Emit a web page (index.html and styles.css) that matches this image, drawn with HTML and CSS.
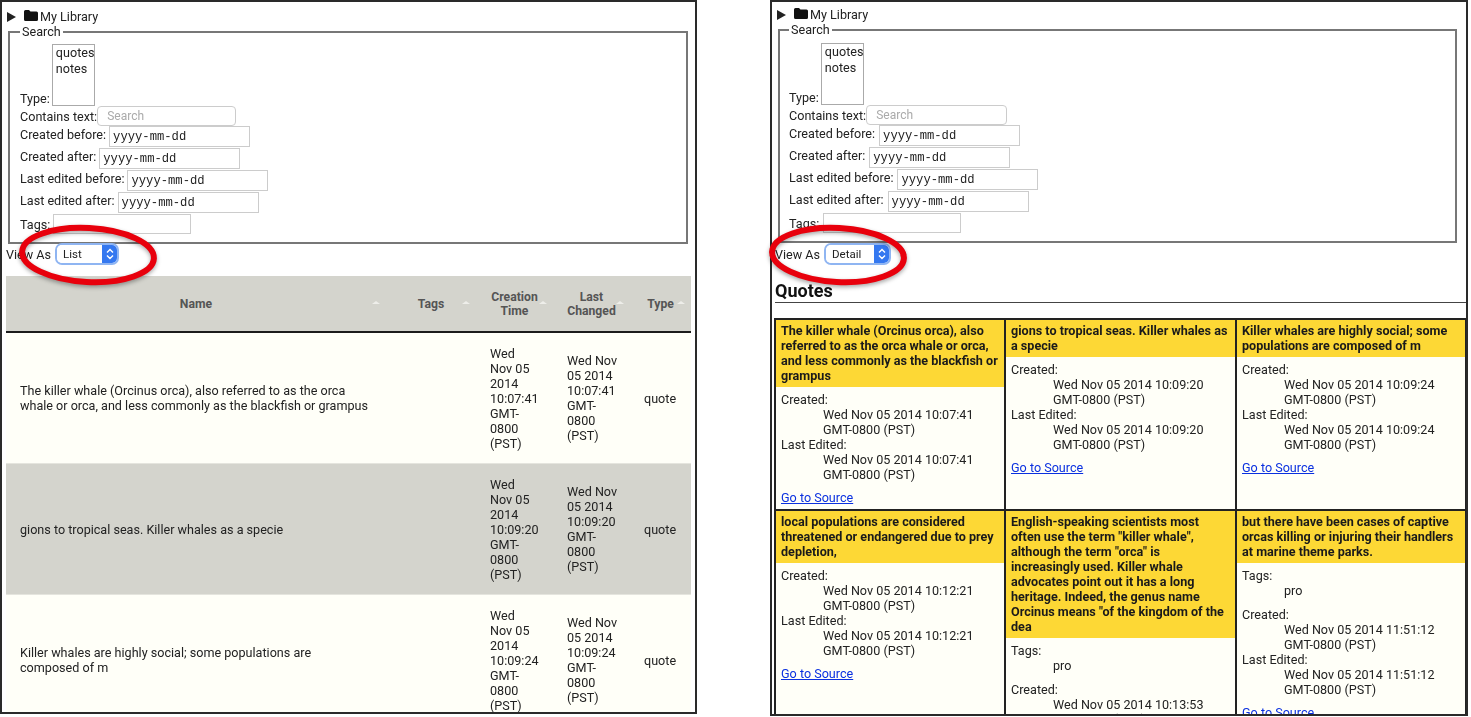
FILE: index.html
```html
<!DOCTYPE html>
<html lang="en">
<head>
<meta name="viewport" content="width=device-width, initial-scale=1">
<title>My Library</title>
<link rel="stylesheet" href="styles.css">
</head>
<body>

<div class="shots">

  <!-- list view -->
  <div class="shot shot-list">
    <div class="panel">
      <div class="tree">
        <span class="arrow"></span>
        <svg class="folder" width="14" height="11" viewBox="0 0 14 11"><path d="M0 1.5Q0 0 1.5 0H5L6.5 1.5H12.5Q14 1.5 14 3V9.5Q14 11 12.5 11H1.5Q0 11 0 9.5Z"/></svg>
        <span>My Library</span>
      </div>
      <fieldset class="search">
        <legend>Search</legend>
        <div class="row row-type"><label>Type:</label><div class="listbox"><div>quotes</div><div>notes</div></div></div>
        <div class="row row-plain"><label>Contains text:</label><input class="text-search" type="text" placeholder="Search"></div>
        <div class="row"><label>Created before:</label><input class="date" type="text" value="yyyy-mm-dd"></div>
        <div class="row"><label>Created after:</label><input class="date" type="text" value="yyyy-mm-dd"></div>
        <div class="row"><label>Last edited before:</label><input class="date" type="text" value="yyyy-mm-dd"></div>
        <div class="row"><label>Last edited after:</label><input class="date" type="text" value="yyyy-mm-dd"></div>
        <div class="row row-plain"><label>Tags:</label><input class="tags" type="text"></div>
      </fieldset>
      <div class="view-as">
        <span>View As</span>
        <div class="view-select">
          <select><option>List</option></select>
          <span class="chevrons"><svg width="8" height="12" viewBox="0 0 8 12"><path d="M1 4.5L4 1.5L7 4.5M1 7.5L4 10.5L7 7.5" fill="none" stroke="#fff" stroke-width="1.4"/></svg></span>
        </div>
      </div>
      <table class="items">
        <colgroup><col class="c-name"><col class="c-tags"><col class="c-date"><col class="c-date"><col class="c-type"></colgroup>
        <thead>
          <tr><th>Name</th><th>Tags</th><th>Creation Time</th><th>Last Changed</th><th>Type</th></tr>
        </thead>
        <tbody>
          <tr>
            <td>The killer whale (Orcinus orca), also referred to as the orca whale or orca, and less commonly as the blackfish or grampus</td>
            <td></td>
            <td>Wed Nov 05 2014 10:07:41 GMT-0800 (PST)</td>
            <td>Wed Nov 05 2014 10:07:41 GMT-0800 (PST)</td>
            <td>quote</td>
          </tr>
          <tr>
            <td>gions to tropical seas. Killer whales as a specie</td>
            <td></td>
            <td>Wed Nov 05 2014 10:09:20 GMT-0800 (PST)</td>
            <td>Wed Nov 05 2014 10:09:20 GMT-0800 (PST)</td>
            <td>quote</td>
          </tr>
          <tr>
            <td>Killer whales are highly social; some populations are composed of m</td>
            <td></td>
            <td>Wed Nov 05 2014 10:09:24 GMT-0800 (PST)</td>
            <td>Wed Nov 05 2014 10:09:24 GMT-0800 (PST)</td>
            <td>quote</td>
          </tr>
        </tbody>
      </table>
    </div>
    <svg class="circle" width="150" height="70" viewBox="0 0 150 70"><ellipse cx="75" cy="34" rx="66" ry="27" transform="rotate(3 75 34)"/></svg>
  </div>

  <!-- detail view -->
  <div class="shot shot-detail">
    <div class="panel">
      <div class="tree">
        <span class="arrow"></span>
        <svg class="folder" width="14" height="11" viewBox="0 0 14 11"><path d="M0 1.5Q0 0 1.5 0H5L6.5 1.5H12.5Q14 1.5 14 3V9.5Q14 11 12.5 11H1.5Q0 11 0 9.5Z"/></svg>
        <span>My Library</span>
      </div>
      <fieldset class="search">
        <legend>Search</legend>
        <div class="row row-type"><label>Type:</label><div class="listbox"><div>quotes</div><div>notes</div></div></div>
        <div class="row row-plain"><label>Contains text:</label><input class="text-search" type="text" placeholder="Search"></div>
        <div class="row"><label>Created before:</label><input class="date" type="text" value="yyyy-mm-dd"></div>
        <div class="row"><label>Created after:</label><input class="date" type="text" value="yyyy-mm-dd"></div>
        <div class="row"><label>Last edited before:</label><input class="date" type="text" value="yyyy-mm-dd"></div>
        <div class="row"><label>Last edited after:</label><input class="date" type="text" value="yyyy-mm-dd"></div>
        <div class="row row-plain"><label>Tags:</label><input class="tags" type="text"></div>
      </fieldset>
      <div class="view-as">
        <span>View As</span>
        <div class="view-select">
          <select><option>Detail</option></select>
          <span class="chevrons"><svg width="8" height="12" viewBox="0 0 8 12"><path d="M1 4.5L4 1.5L7 4.5M1 7.5L4 10.5L7 7.5" fill="none" stroke="#fff" stroke-width="1.4"/></svg></span>
        </div>
      </div>
      <h2 class="section">Quotes</h2>
      <div class="cards">
        <div class="card">
          <div class="card-title">The killer whale (Orcinus orca), also referred to as the orca whale or orca, and less commonly as the blackfish or grampus</div>
          <div class="card-body">
            <div>Created:</div>
            <div class="val">Wed Nov 05 2014 10:07:41 GMT-0800 (PST)</div>
            <div>Last Edited:</div>
            <div class="val">Wed Nov 05 2014 10:07:41 GMT-0800 (PST)</div>
            <a class="source" href="#">Go to Source</a>
          </div>
        </div>
        <div class="card">
          <div class="card-title">gions to tropical seas. Killer whales as a specie</div>
          <div class="card-body">
            <div>Created:</div>
            <div class="val">Wed Nov 05 2014 10:09:20 GMT-0800 (PST)</div>
            <div>Last Edited:</div>
            <div class="val">Wed Nov 05 2014 10:09:20 GMT-0800 (PST)</div>
            <a class="source" href="#">Go to Source</a>
          </div>
        </div>
        <div class="card">
          <div class="card-title">Killer whales are highly social; some populations are composed of m</div>
          <div class="card-body">
            <div>Created:</div>
            <div class="val">Wed Nov 05 2014 10:09:24 GMT-0800 (PST)</div>
            <div>Last Edited:</div>
            <div class="val">Wed Nov 05 2014 10:09:24 GMT-0800 (PST)</div>
            <a class="source" href="#">Go to Source</a>
          </div>
        </div>
        <div class="card">
          <div class="card-title">local populations are considered threatened or endangered due to prey depletion,</div>
          <div class="card-body">
            <div>Created:</div>
            <div class="val">Wed Nov 05 2014 10:12:21 GMT-0800 (PST)</div>
            <div>Last Edited:</div>
            <div class="val">Wed Nov 05 2014 10:12:21 GMT-0800 (PST)</div>
            <a class="source" href="#">Go to Source</a>
          </div>
        </div>
        <div class="card">
          <div class="card-title">English-speaking scientists most often use the term "killer whale", although the term "orca" is increasingly used. Killer whale advocates point out it has a long heritage. Indeed, the genus name Orcinus means "of the kingdom of the dea</div>
          <div class="card-body">
            <div>Tags:</div>
            <div class="val val-tag">pro</div>
            <div>Created:</div>
            <div class="val">Wed Nov 05 2014 10:13:53 GMT-0800 (PST)</div>
          </div>
        </div>
        <div class="card">
          <div class="card-title">but there have been cases of captive orcas killing or injuring their handlers at marine theme parks.</div>
          <div class="card-body">
            <div>Tags:</div>
            <div class="val val-tag">pro</div>
            <div>Created:</div>
            <div class="val">Wed Nov 05 2014 11:51:12 GMT-0800 (PST)</div>
            <div>Last Edited:</div>
            <div class="val">Wed Nov 05 2014 11:51:12 GMT-0800 (PST)</div>
            <a class="source" href="#">Go to Source</a>
          </div>
        </div>
      </div>
    </div>
    <svg class="circle" width="150" height="70" viewBox="0 0 150 70"><ellipse cx="75" cy="34" rx="66" ry="27" transform="rotate(3 75 34)"/></svg>
  </div>

</div>

</body>
</html>
```

FILE: styles.css
```css
body {
  font-family: Roboto, "Liberation Sans", sans-serif;
  font-size: 12.6px;
  line-height: 15px;
  color: #222;
  background-color: #fff;
  margin: 0;
}

.shots {
  display: flex;
  gap: 73px;
}

.shot {
  position: relative;
}

.shot-list {
  width: 697px;
}

.shot-detail {
  width: 698px;
}

.panel {
  box-sizing: border-box;
  height: 714px;
  border: 2px solid #2a2a2a;
  overflow: hidden;
  padding: 7px 4px 0 4px;
  filter: blur(0.3px);
}

.shot-detail .panel {
  height: 716px;
  padding: 5px 0 0 4px;
}

.tree {
  display: flex;
  align-items: center;
  height: 15px;
  margin-bottom: 1px;
  padding-left: 1px;
}

.arrow {
  width: 0;
  height: 0;
  border-top: 5px solid transparent;
  border-bottom: 5px solid transparent;
  border-left: 9px solid #222;
  margin-right: 8px;
}

.folder {
  fill: #111;
  margin-right: 2px;
  margin-top: -3px;
}

.search {
  margin: 0 3px 0 2px;
  padding: 5px 10px 5px 10px;
  border: 2px solid #777;
  height: 219px;
  box-sizing: border-box;
}

.shot-detail .search {
  margin-right: 9px;
  padding: 6px 10px 5px 9px;
  height: 220px;
}

.search legend {
  padding: 0 2px;
  margin-left: 0;
  line-height: 14px;
}

.row {
  display: flex;
  align-items: flex-start;
  gap: 3px;
  margin-bottom: 1px;
}

.row label {
  padding-top: 1px;
}

.row-plain {
  margin-bottom: 0;
}

.row-plain label {
  padding-top: 3px;
}

.row-type {
  align-items: flex-end;
  gap: 2px;
  margin-bottom: 0;
}

.listbox {
  box-sizing: border-box;
  width: 43px;
  height: 62px;
  border: 1px solid #aaa;
  padding: 0 3px;
  line-height: 16px;
}

input {
  box-sizing: border-box;
  height: 21px;
  margin: 0;
  border: 1px solid #ccc;
  background-color: #fff;
  color: #333;
}

.text-search {
  width: 139px;
  height: 20px;
  margin-left: -3px;
  border-radius: 4px;
  padding: 0 9px;
  font: 12px Roboto, sans-serif;
}

.shot-detail .text-search {
  width: 141px;
}

.text-search::placeholder {
  color: #aaa;
}

.date {
  width: 141px;
  padding: 0 3px;
  font: 12.2px "Liberation Mono", monospace;
  color: #222;
}

.shot-detail .date,
.shot-detail .tags {
  margin-left: 1px;
}

.tags {
  width: 138px;
  height: 20px;
  margin-bottom: 1px;
}

.view-as {
  display: flex;
  align-items: center;
  gap: 6px;
  height: 22px;
  margin-top: -1px;
}

.shot-detail .view-as {
  margin-top: 0;
  margin-left: -1px;
}

.view-select {
  position: relative;
  width: 60px;
  height: 18px;
  border-radius: 5px;
  box-shadow: 0 0 0 2px #8fb5f2;
}

.shot-detail .view-select {
  width: 63px;
}

.view-select select {
  appearance: none;
  width: 100%;
  height: 100%;
  border: none;
  border-radius: 5px;
  background-color: #fff;
  padding: 0 6px;
  font: 11.5px Roboto, sans-serif;
  color: #222;
}

.chevrons {
  position: absolute;
  top: 0;
  right: 0;
  width: 15px;
  height: 18px;
  display: flex;
  align-items: center;
  justify-content: center;
  border-radius: 0 5px 5px 0;
  background-color: #3478f0;
}

/* list view table */
.items {
  table-layout: fixed;
  width: 685px;
  margin-top: 11px;
  border-collapse: collapse;
}

.c-name { width: 380px; }
.c-tags { width: 90px; }
.c-date { width: 77px; }
.c-type { width: 61px; }

.items th {
  position: relative;
  height: 55px;
  padding: 0 14px;
  background-color: #d4d4cd;
  border-bottom: 2px solid #1c1c1c;
  color: #555;
  font-size: 12.2px;
  line-height: 14px;
  font-weight: bold;
  text-align: center;
}

.items th::after {
  content: "";
  position: absolute;
  top: 25px;
  right: 6px;
  border-left: 4px solid transparent;
  border-right: 4px solid transparent;
  border-bottom: 3px solid #eeeeea;
}

.items th:last-child {
  padding: 0;
}

.items td {
  height: 130px;
  padding: 0 14px;
  background-color: #fffff8;
  border-bottom: 1px solid #e5e5de;
}

.items td:first-child {
  padding-right: 16px;
}

.items td:nth-child(4) {
  padding-right: 10px;
}

.items tr:nth-child(even) td {
  background-color: #d4d4cd;
}

/* detail view */
.section {
  margin: 16px 0 15px -1px;
  padding-bottom: 1px;
  border-bottom: 1px solid #444;
  font-size: 18px;
  line-height: 20px;
  color: #111;
}

.cards {
  display: grid;
  grid-template-columns: 230px 231px 230px;
  margin-left: -2px;
  border-top: 2px solid #222;
  border-left: 2px solid #222;
}

.card {
  border-right: 2px solid #222;
  border-bottom: 2px solid #222;
  background-color: #fffff8;
}

.card-title {
  padding: 3px 5px 4px 5px;
  background-color: #fdd835;
  color: #1a1a1a;
  font-weight: bold;
}

.card-body {
  padding: 5px 5px 0 5px;
}

.val {
  margin-left: 42px;
}

.val-tag {
  margin-bottom: 9px;
}

.source {
  display: block;
  margin-top: 8px;
  margin-bottom: 4px;
  color: #0a30e0;
}

.circle {
  position: absolute;
  top: 221px;
  left: 13px;
  overflow: visible;
  filter: drop-shadow(0 2px 2px rgba(0,0,0,0.35));
}

.shot-detail .circle {
  left: -7px;
}

.circle ellipse {
  fill: none;
  stroke: #e8000c;
  stroke-width: 6;
}
```
